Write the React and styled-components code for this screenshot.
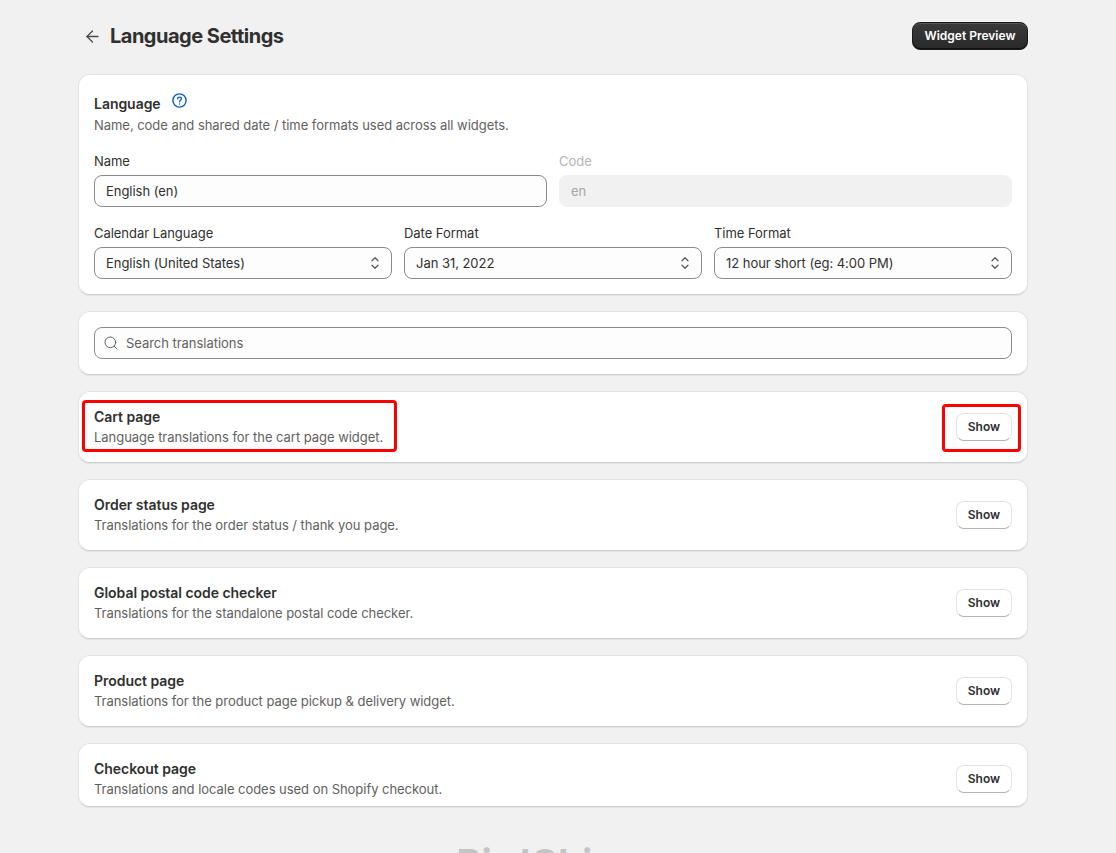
import styled, { createGlobalStyle } from "styled-components";
import { ArrowLeft, Search } from "lucide-react";

const sections = [
  { title: "Cart page", text: "Language translations for the cart page widget.", marked: true },
  { title: "Order status page", text: "Translations for the order status / thank you page." },
  { title: "Global postal code checker", text: "Translations for the standalone postal code checker." },
  { title: "Product page", text: "Translations for the product page pickup & delivery widget." },
  { title: "Checkout page", text: "Translations and locale codes used on Shopify checkout.", short: true },
];

const Chevrons = () => (
  <SelectIcon width="10" height="16" viewBox="0 0 10 16" fill="none" stroke="#5c5c5c" strokeWidth="1.3" strokeLinecap="round" strokeLinejoin="round">
    <path d="M2 5.8 5 2.8 8 5.8" />
    <path d="M2 10.2 5 13.2 8 10.2" />
  </SelectIcon>
);

const HelpIcon = () => (
  <svg width="15" height="15" viewBox="0 0 15 15" fill="none" stroke="#0a5bd3" strokeWidth="1.4" strokeLinecap="round">
    <circle cx="7.5" cy="7.5" r="6.6" />
    <path d="M5.6 5.9c0-1.1.9-1.8 1.9-1.8s1.9.7 1.9 1.7c0 1.5-1.9 1.5-1.9 2.9" />
    <path d="M7.5 10.9v.1" />
  </svg>
);

const App = () => (
  <Page>
    <GlobalStyle />
    <Header>
      <HeaderTitle>
        <ArrowLeft size={19} color="#4a4a4a" strokeWidth={1.6} />
        <h1>Language Settings</h1>
      </HeaderTitle>
      <PreviewButton>Widget Preview</PreviewButton>
    </Header>

    <Card>
      <CardTitle>
        <h2>Language</h2>
        <HelpIcon />
      </CardTitle>
      <Muted>Name, code and shared date / time formats used across all widgets.</Muted>
      <NameGrid>
        <Field>
          <Label>Name</Label>
          <Input>English (en)</Input>
        </Field>
        <Field>
          <Label $disabled>Code</Label>
          <Input $disabled>en</Input>
        </Field>
      </NameGrid>
      <FormatGrid>
        <Field>
          <Label>Calendar Language</Label>
          <Input>English (United States)<Chevrons /></Input>
        </Field>
        <Field>
          <Label>Date Format</Label>
          <Input>Jan 31, 2022<Chevrons /></Input>
        </Field>
        <Field>
          <Label>Time Format</Label>
          <Input>12 hour short (eg: 4:00 PM)<Chevrons /></Input>
        </Field>
      </FormatGrid>
    </Card>

    <Card>
      <SearchInput>
        <Search size={16} color="#616161" strokeWidth={1.5} />
        Search translations
      </SearchInput>
    </Card>

    {sections.map((section) => (
      <SectionCard key={section.title} $short={section.short}>
        <div>
          <SectionTitle>{section.title}</SectionTitle>
          <Muted>{section.text}</Muted>
        </div>
        <ShowButton>Show</ShowButton>
        {section.marked && <TextMark />}
        {section.marked && <ButtonMark />}
      </SectionCard>
    ))}

    <FooterLogo>BirdChime</FooterLogo>
  </Page>
);

const GlobalStyle = createGlobalStyle`
  html, body {
    margin: 0;
    height: 853px;
    overflow: hidden;
    background: #f1f1f1;
  }
  body {
    font-family: Inter, "Liberation Sans", sans-serif;
    font-size: 13px;
    line-height: 20px;
    letter-spacing: -0.04px;
    color: #303030;
  }
`;

const Page = styled.div`
  width: 950px;
  margin-left: 78px;
  padding-top: 22px;
  display: flex;
  flex-direction: column;
  gap: 16px;
`;

const Header = styled.header`
  display: flex;
  align-items: center;
  justify-content: space-between;
  height: 28px;
  margin-bottom: 8px;
`;

const HeaderTitle = styled.div`
  display: flex;
  align-items: center;
  gap: 8px;
  padding-left: 5px;

  h1 {
    margin: 0;
    font-size: 20px;
    line-height: 28px;
    font-weight: 700;
    letter-spacing: -0.5px;
    color: #303030;
  }
`;

const PreviewButton = styled.button`
  width: 116px;
  height: 28px;
  padding: 0 0 2px;
  border: 1px solid #1a1a1a;
  border-radius: 8px;
  background: linear-gradient(#3a3a3a, #2a2a2a);
  box-shadow: inset 0 1px 0 #555, inset 0 -1px 0 #111;
  color: #fff;
  font: 600 12px Inter, sans-serif;
`;

const Card = styled.section`
  position: relative;
  box-sizing: border-box;
  padding: 15px;
  background: #fff;
  border: 1px solid #e3e3e3;
  border-bottom-color: #cfcfcf;
  border-radius: 12px;
  box-shadow: 0 1px 1px rgba(0, 0, 0, 0.06);
`;

const CardTitle = styled.div`
  display: flex;
  align-items: center;
  gap: 11px;
  height: 25px;

  h2 {
    margin: 3px 0 0;
    font-size: 14px;
    font-weight: 600;
  }

  svg {
    margin-bottom: 4px;
  }
`;

const Muted = styled.p`
  margin: 0;
  color: #616161;
  font-size: 13px;
  line-height: 20px;
`;

const NameGrid = styled.div`
  display: grid;
  grid-template-columns: 1fr 1fr;
  gap: 12px;
  margin-top: 16px;
`;

const FormatGrid = styled.div`
  display: grid;
  grid-template-columns: repeat(3, 1fr);
  gap: 12px;
  margin-top: 16px;
`;

const Field = styled.div`
  min-width: 0;
`;

const Label = styled.div`
  height: 20px;
  margin-bottom: 4px;
  color: ${(p) => (p.$disabled ? "#b5b5b5" : "#303030")};
`;

const Input = styled.div`
  position: relative;
  box-sizing: border-box;
  height: 32px;
  display: flex;
  align-items: center;
  padding: 0 11px;
  border: 1px solid ${(p) => (p.$disabled ? "#f1f1f1" : "#8a8a8a")};
  border-radius: 8px;
  background: ${(p) => (p.$disabled ? "#f1f1f1" : "#fdfdfd")};
  color: ${(p) => (p.$disabled ? "#a8a8a8" : "#303030")};
`;

const SelectIcon = styled.svg`
  margin-left: auto;
`;

const SearchInput = styled(Input)`
  gap: 7px;
  padding: 0 8px;
  color: #616161;
`;

const SectionCard = styled(Card)`
  display: flex;
  justify-content: space-between;
  align-items: flex-start;
  padding-bottom: ${(p) => (p.$short ? "7px" : "15px")};
`;

const SectionTitle = styled.h3`
  margin: 0;
  font-size: 14px;
  line-height: 20px;
  font-weight: 600;
`;

const ShowButton = styled.button`
  width: 56px;
  height: 28px;
  margin-top: 6px;
  padding: 0 0 1px;
  border: 1px solid #e3e3e3;
  border-bottom-color: #b5b5b5;
  border-radius: 8px;
  background: #fff;
  color: #303030;
  font: 600 12px Inter, sans-serif;
`;

const TextMark = styled.div`
  position: absolute;
  left: 3px;
  top: 8px;
  width: 315px;
  height: 52px;
  box-sizing: border-box;
  border: 3px solid #f00;
  border-radius: 4px;
`;

const ButtonMark = styled.div`
  position: absolute;
  right: 6px;
  top: 12px;
  width: 79px;
  height: 48px;
  box-sizing: border-box;
  border: 3px solid #f00;
  border-radius: 4px;
`;

const FooterLogo = styled.div`
  margin-top: 18px;
  margin-right: 0;
  text-align: center;
  font-size: 38px;
  line-height: 44px;
  font-weight: 700;
  color: #c4c4c4;
`;

export default App;
